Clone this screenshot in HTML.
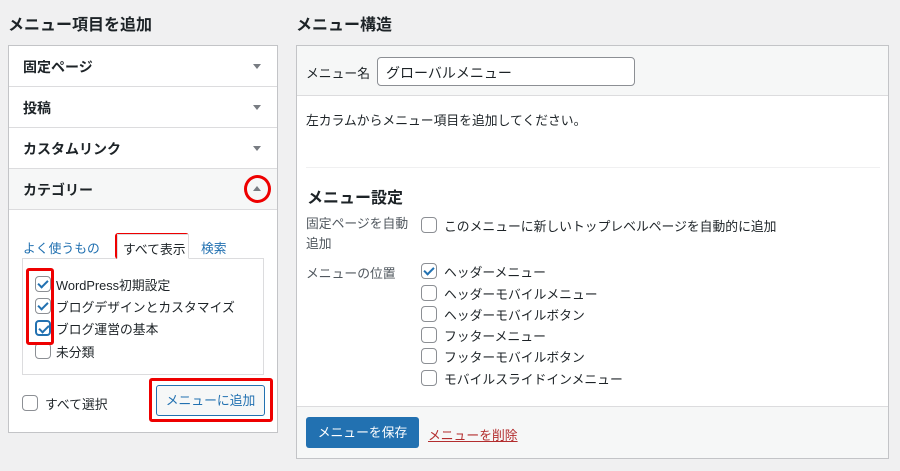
<!DOCTYPE html>
<html><head><meta charset="utf-8"><style>
*{box-sizing:border-box;margin:0;padding:0}
body{width:900px;height:471px;background:#f0f0f1;font-family:"Liberation Sans","Noto Sans CJK JP",sans-serif;font-size:12.8px;color:#1d2327;position:relative;overflow:hidden}
.a{position:absolute;white-space:nowrap}
h2{position:absolute;font-size:16px;font-weight:bold;color:#1d2327}
.box{position:absolute;background:#fff;border:1px solid #c3c4c7}
.row{position:absolute;left:0;right:0;height:41px;border-bottom:1px solid #dcdcde;font-weight:bold;font-size:14px;padding:11px 14px}
.arr{position:absolute;right:16px;top:18px;width:0;height:0;border-left:4px solid transparent;border-right:4px solid transparent;border-top:5px solid #787c82}
.cb{position:absolute;width:16px;height:16px;border:1px solid #8c8f94;border-radius:4px;background:#fff}
.cb.on::after{content:"";position:absolute;left:4px;top:1px;width:4px;height:8px;border:solid #2271b1;border-width:0 2px 2px 0;transform:rotate(45deg)}
.red{position:absolute;border:3px solid #e00;border-radius:3px}
</style></head><body>
<h2 style="left:8px;top:11px">メニュー項目を追加</h2>
<h2 style="left:296px;top:11px">メニュー構造</h2>
<div class="box" style="left:8px;top:45px;width:270px;height:388px">
 <div class="row" style="top:0">固定ページ<div class="arr"></div></div>
 <div class="row" style="top:41px">投稿<div class="arr"></div></div>
 <div class="row" style="top:82px">カスタムリンク<div class="arr"></div></div>
 <div class="row" style="top:123px;background:#f6f7f7">カテゴリー<div class="arr" style="border-top:0;border-bottom:5px solid #787c82;top:17px"></div></div>
 <div class="a" style="left:14px;top:192px;color:#2271b1">よく使うもの</div>
 <div class="a" style="left:108px;top:188px;width:72px;height:25px;border:1px solid #dcdcde;border-bottom:1px solid #fff;background:#fff;padding:4px 5px;z-index:2">すべて表示</div>
 <div class="a" style="left:192px;top:192px;color:#2271b1">検索</div>
 <div class="a" style="left:13px;top:212px;width:242px;height:117px;border:1px solid #dcdcde"></div>
 <div class="cb on" style="left:26px;top:230px"></div><div class="a" style="left:47px;top:229px">WordPress初期設定</div>
 <div class="cb on" style="left:26px;top:252px"></div><div class="a" style="left:47px;top:251px">ブログデザインとカスタマイズ</div>
 <div class="cb on" style="left:26px;top:274px;border-color:#2271b1;border-width:2px"></div><div class="a" style="left:47px;top:273px">ブログ運営の基本</div>
 <div class="cb" style="left:26px;top:297px"></div><div class="a" style="left:47px;top:296px">未分類</div>
 <div class="cb" style="left:13px;top:349px"></div><div class="a" style="left:36px;top:348px">すべて選択</div>
 <div class="a" style="left:147px;top:339px;width:109px;height:31px;border:1px solid #2271b1;border-radius:3px;background:#f6f7f7;color:#2271b1;text-align:center;line-height:29px">メニューに追加</div>
</div>
<div class="red" style="left:244px;top:175px;width:27px;height:28px;border-radius:50%"></div>
<div class="red" style="left:115px;top:233px;width:74px;height:26px"></div>
<div class="red" style="left:26px;top:268px;width:28px;height:77px"></div>
<div class="red" style="left:149px;top:378px;width:124px;height:44px"></div>
<div class="box" style="left:296px;top:45px;width:593px;height:414px">
 <div class="a" style="left:0;top:0;width:591px;height:50px;background:#f6f7f7;border-bottom:1px solid #dcdcde"></div>
 <div class="a" style="left:9px;top:17px">メニュー名</div>
 <div class="a" style="left:80px;top:11px;width:258px;height:29px;border:1px solid #8c8f94;border-radius:4px;background:#fff;padding:5px 8px;font-size:14px">グローバルメニュー</div>
 <div class="a" style="left:9px;top:64px">左カラムからメニュー項目を追加してください。</div>
 <div class="a" style="left:9px;top:121px;width:574px;height:1px;background:#f0f0f1"></div>
 <div class="a" style="left:10px;top:138px;font-size:16px;font-weight:bold">メニュー設定</div>
 <div class="a" style="left:9px;top:168px;color:#50575e;line-height:20px;white-space:normal;width:110px">固定ページを自動追加</div>
 <div class="cb" style="left:124px;top:171px"></div><div class="a" style="left:147px;top:170px">このメニューに新しいトップレベルページを自動的に追加</div>
 <div class="a" style="left:9px;top:217px;color:#50575e">メニューの位置</div>
 <div class="cb on" style="left:124px;top:217px"></div><div class="a" style="left:147px;top:216px">ヘッダーメニュー</div>
 <div class="cb" style="left:124px;top:239px"></div><div class="a" style="left:147px;top:238px">ヘッダーモバイルメニュー</div>
 <div class="cb" style="left:124px;top:260px"></div><div class="a" style="left:147px;top:259px">ヘッダーモバイルボタン</div>
 <div class="cb" style="left:124px;top:281px"></div><div class="a" style="left:147px;top:280px">フッターメニュー</div>
 <div class="cb" style="left:124px;top:302px"></div><div class="a" style="left:147px;top:301px">フッターモバイルボタン</div>
 <div class="cb" style="left:124px;top:324px"></div><div class="a" style="left:147px;top:323px">モバイルスライドインメニュー</div>
 <div class="a" style="left:0;top:360px;width:591px;height:52px;background:#f6f7f7;border-top:1px solid #dcdcde"></div>
 <div class="a" style="left:9px;top:371px;width:113px;height:31px;background:#2271b1;border-radius:3px;color:#fff;text-align:center;line-height:31px">メニューを保存</div>
 <div class="a" style="left:131px;top:379px;color:#b32d2e;text-decoration:underline">メニューを削除</div>
</div>
</body></html>
